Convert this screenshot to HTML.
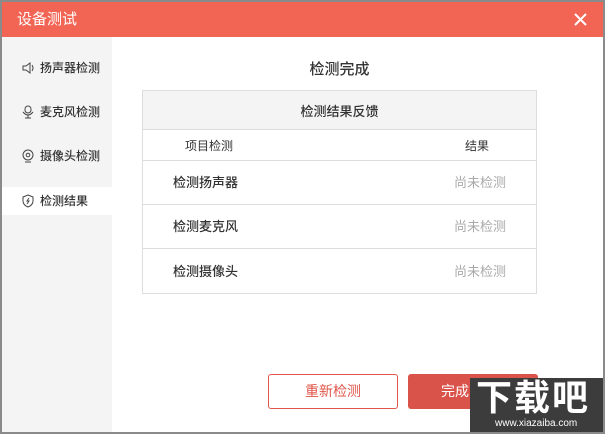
<html><head><style>
body{margin:0;width:605px;height:434px;overflow:hidden;background:#8a8a8a;font-family:"Liberation Sans","Noto Sans CJK SC",sans-serif;position:relative}
.win{position:absolute;left:2px;top:2px;width:601px;height:430px;background:#fff}
.title{position:absolute;left:0;top:0;width:601px;height:35px;background:#f26555;color:#fff;font-size:15px;line-height:35px}
.title span{position:absolute;left:15px}
.side{position:absolute;left:0;top:35px;width:110px;height:395px;background:#f4f4f4}
.it{position:absolute;left:0;width:110px;height:28px;line-height:28px;font-size:12px;color:#333}
.it svg{position:absolute;left:19px;top:7px}
.it b{font-weight:500;position:absolute;left:38px}
.a{position:absolute}
table{position:absolute;left:140px;top:88px;width:395px;border-collapse:collapse;font-size:13px;color:#333}
td{border-bottom:1px solid #ddd}
</style></head><body><div class="win">
<div class="title"><span>设备测试</span><svg class="a" style="left:572px;top:11px" width="13" height="13"><path d="M1 1L12 12M12 1L1 12" stroke="#fff" stroke-width="2"/></svg></div>
<div class="side">
<div class="it" style="top:17px"><svg width="14" height="14"><path d="M2 5h3l4-3v10l-4-3H2z M11 4q2 3 0 6" fill="none" stroke="#444"/></svg><b>扬声器检测</b></div>
<div class="it" style="top:61px"><svg width="14" height="14"><rect x="4" y="1" width="6" height="7" rx="3" fill="none" stroke="#444"/><path d="M2 7q5 6 10 0M7 10v3M4 13h6" fill="none" stroke="#444"/></svg><b>麦克风检测</b></div>
<div class="it" style="top:105px"><svg width="14" height="14"><circle cx="7" cy="6" r="5" fill="none" stroke="#444"/><circle cx="7" cy="6" r="1.8" fill="none" stroke="#444"/><path d="M4 13h6" stroke="#444"/></svg><b>摄像头检测</b></div>
<div class="it" style="top:150px;background:#fff"><svg width="14" height="14"><path d="M7 1l5 2v4q0 4-5 6q-5-2-5-6V3z M8 4l-2 3h2l-2 3" fill="none" stroke="#444"/></svg><b>检测结果</b></div>
</div>
<div class="a" style="left:140px;top:56px;width:395px;text-align:center;font-size:15px;color:#333;font-weight:500">检测完成</div>
<table style="border:1px solid #ddd">
<tr style="height:39px;background:#f4f4f4"><td colspan="2" style="text-align:center;font-weight:500">检测结果反馈</td></tr>
<tr style="height:31px;font-size:12px"><td style="padding-left:42px">项目检测</td><td style="text-align:right;padding-right:47px">结果</td></tr>
<tr style="height:44px"><td style="padding-left:30px;padding-bottom:3px;font-weight:500">检测扬声器</td><td style="text-align:right;padding-right:30px;padding-bottom:3px;color:#aaa">尚未检测</td></tr>
<tr style="height:44px"><td style="padding-left:30px;padding-bottom:3px;font-weight:500">检测麦克风</td><td style="text-align:right;padding-right:30px;padding-bottom:3px;color:#aaa">尚未检测</td></tr>
<tr style="height:45px"><td style="padding-left:30px;padding-bottom:3px;border:0;font-weight:500">检测摄像头</td><td style="text-align:right;padding-right:30px;padding-bottom:3px;color:#aaa;border:0">尚未检测</td></tr>
</table>
<div class="a" style="left:266px;top:372px;width:128px;height:33px;border:1px solid #e0564a;border-radius:3px;color:#e0564a;text-align:center;line-height:33px;font-size:14px">重新检测</div>
<div class="a" style="left:406px;top:372px;width:130px;height:35px;background:#d9534a;border-radius:3px;color:#fff;line-height:35px;font-size:14px"><span style="margin-left:33px">完成</span></div>
<div class="a" style="left:468px;top:376px;width:133px;height:54px;background:#3c3c3c;color:#fff"><div style="font-size:36px;font-weight:bold;line-height:40px;padding-left:6px;letter-spacing:2px">下载吧</div><div style="font-size:10px;padding-left:25px;line-height:12px">www.xiazaiba.com</div></div>
</div></body></html>
